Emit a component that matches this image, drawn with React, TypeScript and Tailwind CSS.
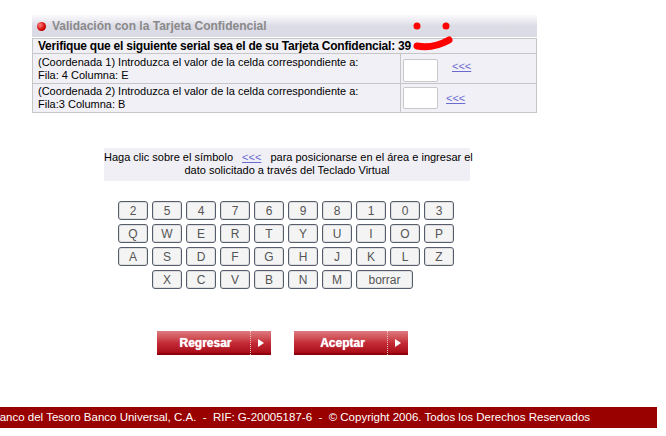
import type { ReactNode } from "react";

const digits = ["2", "5", "4", "7", "6", "9", "8", "1", "0", "3"];
const row2 = ["Q", "W", "E", "R", "T", "Y", "U", "I", "O", "P"];
const row3 = ["A", "S", "D", "F", "G", "H", "J", "K", "L", "Z"];
const row4 = ["X", "C", "V", "B", "N", "M"];

function Key({ label, wide }: { label: string; wide?: boolean }) {
  return (
    <button
      className={`h-[19px] ${wide ? "w-[57px]" : "w-[30px]"} flex items-center justify-center rounded-[3px] border border-[#565d6c] bg-[#f4f4f4] text-[12px] leading-none text-[#555] shadow-[inset_0_0_0_1px_#dedede]`}
    >
      {label}
    </button>
  );
}

function Back() {
  return <span className="text-[11px] text-[#6a6ad0] underline">&lt;&lt;&lt;</span>;
}

function RedButton({ children }: { children: ReactNode }) {
  return (
    <button className="relative flex h-[24px] w-[114px] items-center overflow-hidden bg-gradient-to-b from-[#dc7a80] via-[#c42a36] to-[#a3000e] shadow-[inset_0_-2px_0_#8f000a]">
      <span className="flex-1 pl-[4px] text-center text-[12px] font-bold text-white [text-shadow:0_0_1px_#fff]">
        {children}
      </span>
      <span className="flex h-full w-[21px] items-center justify-center border-l border-dotted border-[#f0c0c4]">
        <svg width="6" height="8" viewBox="0 0 6 8">
          <path d="M0 0 L6 4 L0 8 Z" fill="#fff" />
        </svg>
      </span>
    </button>
  );
}

export default function App() {
  return (
    <div className="relative h-[436px] w-[666px] overflow-hidden bg-white font-['Liberation_Sans',Arial,sans-serif]">
      <div className="ml-[32px] w-[505px] pt-[15px]">
        {/* header */}
        <div className="flex h-[22px] items-center gap-[6px] bg-gradient-to-b from-[#fbfbfd] via-[#dcdce6] to-[#dadae4] pl-[5px]">
          <span className="h-[9px] w-[9px] rounded-full bg-[radial-gradient(circle_at_35%_35%,#ff8080,#d00000_60%,#900000)]" />
          <span className="text-[12px] font-bold text-[#8a8a8a]">Validación con la Tarjeta Confidencial</span>
        </div>

        {/* table */}
        <div className="mt-[1px] border border-[#c6c6c6] bg-[#f1f0f6]">
          <div className="flex h-[15px] items-center border-b border-[#c6c6c6] pl-[5px] text-[12px] font-bold tracking-[-0.22px] text-black">
            Verifique que el siguiente serial sea el de su Tarjeta Confidencial: 39
          </div>
          <div className="flex h-[30px] border-b border-[#c6c6c6]">
            <div className="w-[368px] border-r border-[#c6c6c6] pl-[5px] pt-[2px] text-[11px] leading-[13px] text-black">
              (Coordenada 1) Introduzca el valor de la celda correspondiente a:
              <br />
              Fila: 4 Columna: E
            </div>
            <div className="flex items-end gap-[14px] pb-[1px] pl-[2px]">
              <input className="h-[23px] w-[35px] rounded-[2px] border border-[#c9c9c9] bg-white" />
              <span className="pb-[5px]">
                <Back />
              </span>
            </div>
          </div>
          <div className="flex h-[28px]">
            <div className="w-[368px] border-r border-[#c6c6c6] pl-[5px] pt-[1px] text-[11px] leading-[13px] text-black">
              (Coordenada 2) Introduzca el valor de la celda correspondiente a:
              <br />
              Fila:3 Columna: B
            </div>
            <div className="flex items-center gap-[8px] pl-[2px]">
              <input className="h-[22px] w-[35px] rounded-[2px] border border-[#c9c9c9] bg-white" />
              <Back />
            </div>
          </div>
        </div>
      </div>

      {/* info */}
      <div className="ml-[104px] mt-[35px] w-[366px] whitespace-nowrap bg-[#f0eff5] pt-[3px] pb-[4px] text-center text-[11px] leading-[13px] text-black">
        Haga clic sobre el símbolo <span className="mx-[6px]"><Back /></span> para posicionarse en el área e ingresar el
        <br />
        dato solicitado a través del Teclado Virtual
      </div>

      {/* keyboard */}
      <div className="ml-[118px] mt-[20px] flex flex-col gap-[4px]">
        <div className="flex gap-[4px]">{digits.map((k) => <Key key={k} label={k} />)}</div>
        <div className="flex gap-[4px]">{row2.map((k) => <Key key={k} label={k} />)}</div>
        <div className="flex gap-[4px]">{row3.map((k) => <Key key={k} label={k} />)}</div>
        <div className="ml-[34px] flex gap-[4px]">
          {row4.map((k) => <Key key={k} label={k} />)}
          <Key label="borrar" wide />
        </div>
      </div>

      {/* buttons */}
      <div className="ml-[157px] mt-[42px] flex gap-[23px]">
        <RedButton>Regresar</RedButton>
        <RedButton>Aceptar</RedButton>
      </div>

      {/* footer */}
      <div className="mt-[52px] flex h-[21px] w-[657px] items-center overflow-hidden bg-[#990000]">
        <span className="-ml-[8px] whitespace-pre text-[11.5px] text-white">
          Banco del Tesoro Banco Universal, C.A.  -  RIF: G-20005187-6  -  © Copyright 2006. Todos los Derechos Reservados
        </span>
      </div>

      {/* red redaction marks */}
      <svg className="absolute left-0 top-0" width="666" height="60" viewBox="0 0 666 60">
        <circle cx="417" cy="26" r="3.5" fill="#ff0000" />
        <circle cx="446" cy="26" r="3.5" fill="#ff0000" />
        <path d="M417 46 Q 433 49 449 40" stroke="#ff0000" strokeWidth="7" strokeLinecap="round" fill="none" />
      </svg>
    </div>
  );
}
